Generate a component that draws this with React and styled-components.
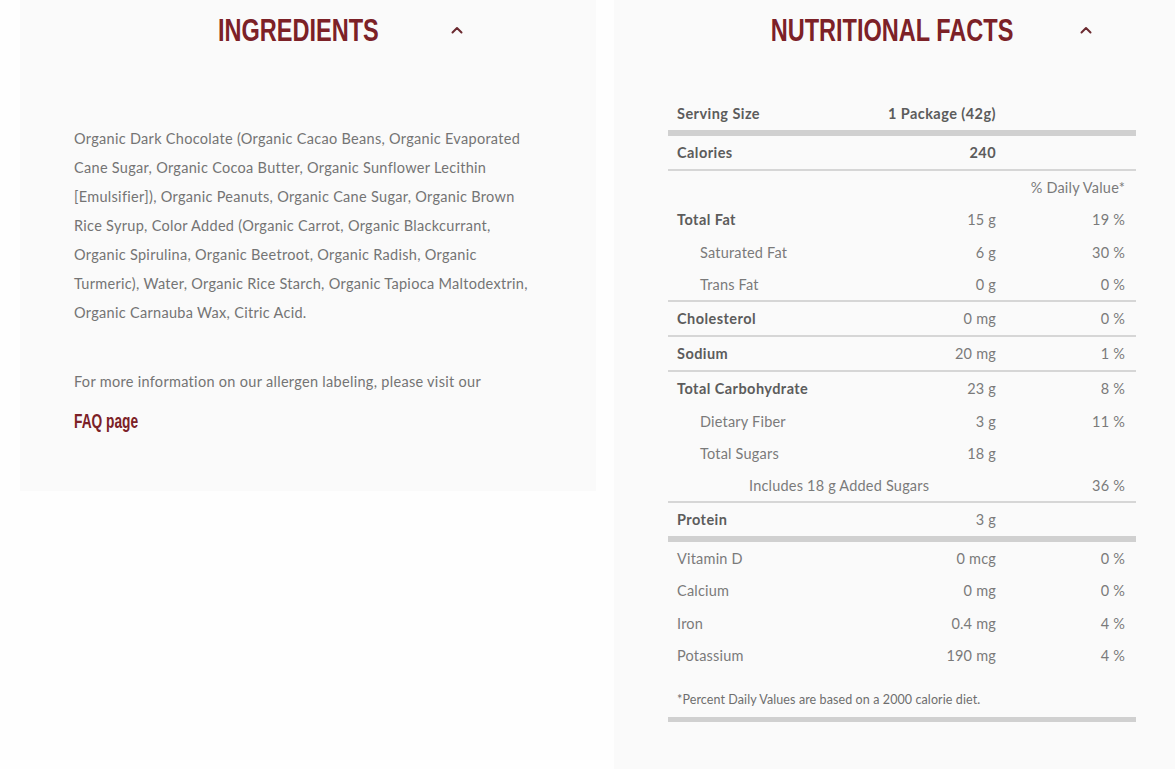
import React from "react";
import styled, { createGlobalStyle } from "styled-components";

const GlobalStyle = createGlobalStyle`
  html, body {
    margin: 0;
    padding: 0;
    background: #fefefe;
    overflow-x: hidden;
  }
  body {
    font-family: Lato, "Open Sans", Arial, sans-serif;
  }
  * { box-sizing: border-box; }
`;

const Page = styled.div`
  display: flex;
  align-items: flex-start;
  gap: 18px;
  padding-left: 20px;
  width: 1300px;
`;

const Panel = styled.section`
  flex: 0 0 576px;
  width: 576px;
  background: #fafafa;
  padding: 0 54px ${(p) => p.$padBottom}px;
`;

const Header = styled.header`
  height: 60px;
  display: flex;
  align-items: center;
  justify-content: center;
  gap: ${(p) => p.$gap}px;
  padding-left: ${(p) => p.$shift}px;
`;

const Title = styled.h2`
  display: inline-block;
  margin: 0 -${(p) => p.$trim}px;
  font-family: "Liberation Sans", Arial, sans-serif;
  font-weight: 700;
  font-size: 32px;
  line-height: 1;
  color: #7c2127;
  text-transform: uppercase;
  white-space: nowrap;
  transform: scaleX(0.735);
  transform-origin: center;
`;

const Chevron = styled.svg`
  width: 12px;
  height: 8px;
  display: block;
  flex: 0 0 auto;
`;

const Body = styled.div`
  padding-top: 64px;
  color: #747474;
  font-size: 14.5px;
  letter-spacing: 0.3px;
  line-height: 29px;
`;

const Paragraph = styled.p`
  margin: 0 0 ${(p) => p.$gap || 0}px;
`;

const FaqLink = styled.a`
  display: block;
  width: max-content;
  margin-top: 13px;
  font-family: "Liberation Sans", Arial, sans-serif;
  font-weight: 700;
  font-size: 20.5px;
  line-height: 24px;
  letter-spacing: 0;
  color: #7c2127;
  text-decoration: none;
  transform: scaleX(0.67);
  transform-origin: left center;
`;

const Table = styled.div`
  margin-top: 37px;
  color: #7a7a7a;
  font-size: 14.5px;
`;

const Row = styled.div`
  display: flex;
  align-items: center;
  height: ${(p) => p.$h}px;
  border-bottom: ${(p) =>
    p.$border === "thick"
      ? "6px solid #d0d0d0"
      : p.$border === "thin"
      ? "2px solid #d6d6d6"
      : "none"};
  box-sizing: content-box;
`;

const Label = styled.div`
  flex: 1 1 auto;
  padding-left: ${(p) => 9 + (p.$indent || 0)}px;
  font-weight: ${(p) => (p.$bold ? 700 : 400)};
  color: ${(p) => (p.$bold ? "#5c5c5c" : "#7a7a7a")};
  letter-spacing: ${(p) => (p.$bold ? "0.45px" : "0.2px")};
  white-space: nowrap;
`;

const Amount = styled.div`
  flex: 0 0 auto;
  text-align: right;
  font-weight: ${(p) => (p.$bold ? 700 : 400)};
  color: ${(p) => (p.$bold ? "#5c5c5c" : "#7a7a7a")};
  letter-spacing: ${(p) => (p.$bold ? "0.45px" : "0.2px")};
  white-space: nowrap;
`;

const Daily = styled.div`
  flex: 0 0 140px;
  width: 140px;
  padding-right: 11px;
  text-align: right;
  letter-spacing: 0.2px;
  white-space: nowrap;
`;

const Footnote = styled.div`
  padding: 20px 0 0 9px;
  height: 25px;
  box-sizing: content-box;
  font-size: 12.5px;
  letter-spacing: 0.1px;
  color: #6e6e6e;
  border-bottom: 5px solid #d0d0d0;
`;

const rows = [
  { label: "Serving Size", amount: "1 Package (42g)", bold: true, boldAmount: true, h: 33, border: "thick" },
  { label: "Calories", amount: "240", bold: true, boldAmount: true, h: 33, border: "thin" },
  { label: "", amount: "", dv: "% Daily Value*", h: 32 },
  { label: "Total Fat", amount: "15 g", dv: "19 %", bold: true, h: 33 },
  { label: "Saturated Fat", amount: "6 g", dv: "30 %", indent: 23, h: 32 },
  { label: "Trans Fat", amount: "0 g", dv: "0 %", indent: 23, h: 32, border: "thin" },
  { label: "Cholesterol", amount: "0 mg", dv: "0 %", bold: true, h: 33, border: "thin" },
  { label: "Sodium", amount: "20 mg", dv: "1 %", bold: true, h: 33, border: "thin" },
  { label: "Total Carbohydrate", amount: "23 g", dv: "8 %", bold: true, h: 33 },
  { label: "Dietary Fiber", amount: "3 g", dv: "11 %", indent: 23, h: 32 },
  { label: "Total Sugars", amount: "18 g", dv: "", indent: 23, h: 32 },
  { label: "Includes 18 g Added Sugars", amount: "", dv: "36 %", indent: 72, h: 32, border: "thin" },
  { label: "Protein", amount: "3 g", dv: "", bold: true, h: 33, border: "thick" },
  { label: "Vitamin D", amount: "0 mcg", dv: "0 %", h: 32.5 },
  { label: "Calcium", amount: "0 mg", dv: "0 %", h: 32.5 },
  { label: "Iron", amount: "0.4 mg", dv: "4 %", h: 32.5 },
  { label: "Potassium", amount: "190 mg", dv: "4 %", h: 32.5 },
];

function Caret() {
  return (
    <Chevron viewBox="0 0 12 8" aria-hidden="true">
      <polyline
        points="1.5,6.5 6,2 10.5,6.5"
        fill="none"
        stroke="#6b2a30"
        strokeWidth="2"
        strokeLinecap="round"
        strokeLinejoin="round"
      />
    </Chevron>
  );
}

export default function App() {
  return (
    <>
      <GlobalStyle />
      <Page>
        <Panel $padBottom={58}>
          <Header $gap={72} $shift={65}>
            <Title $trim={29}>Ingredients</Title>
            <Caret />
          </Header>
          <Body>
            <Paragraph $gap={40}>
              Organic Dark Chocolate (Organic Cacao Beans, Organic Evaporated Cane Sugar,
              Organic Cocoa Butter, Organic Sunflower Lecithin [Emulsifier]), Organic
              Peanuts, Organic Cane Sugar, Organic Brown Rice Syrup, Color Added (Organic
              Carrot, Organic Blackcurrant, Organic Spirulina, Organic Beetroot, Organic
              Radish, Organic Turmeric), Water, Organic Rice Starch, Organic Tapioca
              Maltodextrin, Organic Carnauba Wax, Citric Acid.
            </Paragraph>
            <Paragraph>For more information on our allergen labeling, please visit our</Paragraph>
            <FaqLink href="#">FAQ page</FaqLink>
          </Body>
        </Panel>
        <Panel $padBottom={60}>
          <Header $gap={67} $shift={59}>
            <Title $trim={44}>Nutritional Facts</Title>
            <Caret />
          </Header>
          <Table>
            {rows.map((r, i) => (
              <Row key={i} $h={r.h} $border={r.border}>
                <Label $bold={r.bold} $indent={r.indent}>{r.label}</Label>
                <Amount $bold={r.boldAmount}>{r.amount}</Amount>
                <Daily>{r.dv}</Daily>
              </Row>
            ))}
            <Footnote>*Percent Daily Values are based on a 2000 calorie diet.</Footnote>
          </Table>
        </Panel>
      </Page>
    </>
  );
}
